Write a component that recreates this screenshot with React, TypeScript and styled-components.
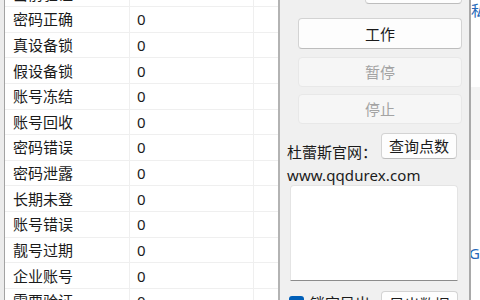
import React from 'react';
import styled, { createGlobalStyle } from 'styled-components';

const GlobalStyle = createGlobalStyle`
  html, body {
    margin: 0;
    padding: 0;
    background: #f0f0f0;
  }
  body {
    font-family: "Noto Sans", "Noto Sans CJK SC", sans-serif;
    font-size: 15px;
    color: #1b1b1b;
  }
  * { box-sizing: border-box; }
`;

const Screen = styled.div`
  display: flex;
  width: 480px;
  height: 300px;
  overflow: hidden;
`;

const Gutter = styled.div`
  flex: none;
  width: 4px;
  background: #ececec;
`;

const Grid = styled.div`
  flex: none;
  width: 274px;
  background: #fff;
  border-left: 1px solid #a3a3a3;
  overflow: hidden;
`;

const Rows = styled.div`
  margin-top: -18.64px;
`;

const Row = styled.div`
  display: grid;
  grid-template-columns: 125px 124px 1fr;
  height: 25.64px;
  border-bottom: 1px solid #efefef;
`;

const Cell = styled.div<{ $pad: number }>`
  display: flex;
  align-items: center;
  padding-left: ${p => p.$pad}px;
  border-right: 1px solid #efefef;
  line-height: 20px;
  white-space: nowrap;
  &:last-child { border-right: none; }
`;

const Split = styled.div<{ $w: number; $c: string }>`
  flex: none;
  width: ${p => p.$w}px;
  background: ${p => p.$c};
`;

const Panel = styled.div`
  flex: none;
  width: 189px;
  padding: 0 7px;
  display: flex;
  flex-direction: column;
  background: #f0f0f0;
  & > * { flex-shrink: 0; }
`;

const Btn = styled.button<{ $h: number }>`
  height: ${p => p.$h}px;
  padding: 0;
  font-family: inherit;
  font-size: 15px;
  line-height: 20px;
  color: #1b1b1b;
  background: #fdfdfd;
  border: 1px solid #d3d3d3;
  border-bottom-color: #bdbdbd;
  border-radius: 4px;
  &:disabled {
    color: #a3a3a3;
    background: #f6f6f6;
    border-color: #e8e8e8;
  }
`;

const TopBtn = styled(Btn)`
  align-self: flex-end;
  width: 97px;
  margin-top: -27px;
`;

const WideBtn = styled(Btn)<{ $gap: number }>`
  margin-left: 11px;
  margin-top: ${p => p.$gap}px;
`;

const QueryRow = styled.div`
  display: flex;
  align-items: flex-end;
  justify-content: space-between;
  margin-top: 9px;
  padding-right: 5px;
`;

const Label = styled.span`
  line-height: 20px;
  margin-bottom: -3px;
  white-space: nowrap;
`;

const SmallBtn = styled(Btn)`
  width: 76px;
`;

const Url = styled.div`
  margin-top: 6px;
  line-height: 20px;
  letter-spacing: 0.1px;
`;

const Memo = styled.textarea`
  margin: 0 3px 0 3px;
  width: 168px;
  height: 96px;
  resize: none;
  background: #fff;
  border: 1px solid #e4e4e4;
  border-bottom: 1px solid #8c8c8c;
  border-radius: 4px 4px 0 0;
  outline: none;
`;

const BottomRow = styled.div`
  display: flex;
  align-items: flex-start;
  margin-top: 10px;
  padding-right: 4px;
`;

const Check = styled.span`
  flex: none;
  width: 15px;
  height: 15px;
  margin: 5px 0 0 2px;
  border-radius: 3px;
  background: #005fb8;
`;

const CheckText = styled.span`
  margin: 2px 0 0 6px;
  line-height: 20px;
  white-space: nowrap;
`;

const ExportBtn = styled(Btn)`
  width: 77px;
  margin-left: auto;
`;

const Behind = styled.div`
  flex: none;
  width: 9px;
  display: flex;
  flex-direction: column;
  background: #fff;
  overflow: hidden;
  color: #2468b8;
  line-height: 20px;
  white-space: nowrap;
  & > * { flex-shrink: 0; }
`;

const Band = styled.div<{ $h: number; $c: string }>`
  height: ${p => p.$h}px;
  background: ${p => p.$c};
`;

const Peek = styled.div<{ $shift: number }>`
  height: 20px;
  margin-left: ${p => p.$shift}px;
`;

const stats = [
  '当前验证', '密码正确', '真设备锁', '假设备锁', '账号冻结', '账号回收', '密码错误',
  '密码泄露', '长期未登', '账号错误', '靓号过期', '企业账号', '需要验证',
];

export default function App() {
  return (
    <>
      <GlobalStyle />
      <Screen>
        <Gutter />
        <Grid>
          <Rows>
            {stats.map(name => (
              <Row key={name}>
                <Cell $pad={8}>{name}</Cell>
                <Cell $pad={7}>0</Cell>
                <Cell $pad={0} />
              </Row>
            ))}
          </Rows>
        </Grid>
        <Split $w={2} $c="#b3b3b3" />
        <Panel>
          <TopBtn $h={31}>开始</TopBtn>
          <WideBtn $h={31} $gap={14}>工作</WideBtn>
          <WideBtn $h={30} $gap={8} disabled>暂停</WideBtn>
          <WideBtn $h={30} $gap={7} disabled>停止</WideBtn>
          <QueryRow>
            <Label>杜蕾斯官网：</Label>
            <SmallBtn $h={26}>查询点数</SmallBtn>
          </QueryRow>
          <Url>www.qqdurex.com</Url>
          <Memo readOnly />
          <BottomRow>
            <Check />
            <CheckText>锁定导出</CheckText>
            <ExportBtn $h={26}>导出数据</ExportBtn>
          </BottomRow>
        </Panel>
        <Split $w={2} $c="#a9a9a9" />
        <Behind>
          <Peek $shift={0}>私</Peek>
          <Band $h={67} $c="#fff" />
          <Band $h={73} $c="#f4f4f4" />
          <Band $h={83} $c="#fff" />
          <Peek $shift={-2}>G稿</Peek>
        </Behind>
      </Screen>
    </>
  );
}
